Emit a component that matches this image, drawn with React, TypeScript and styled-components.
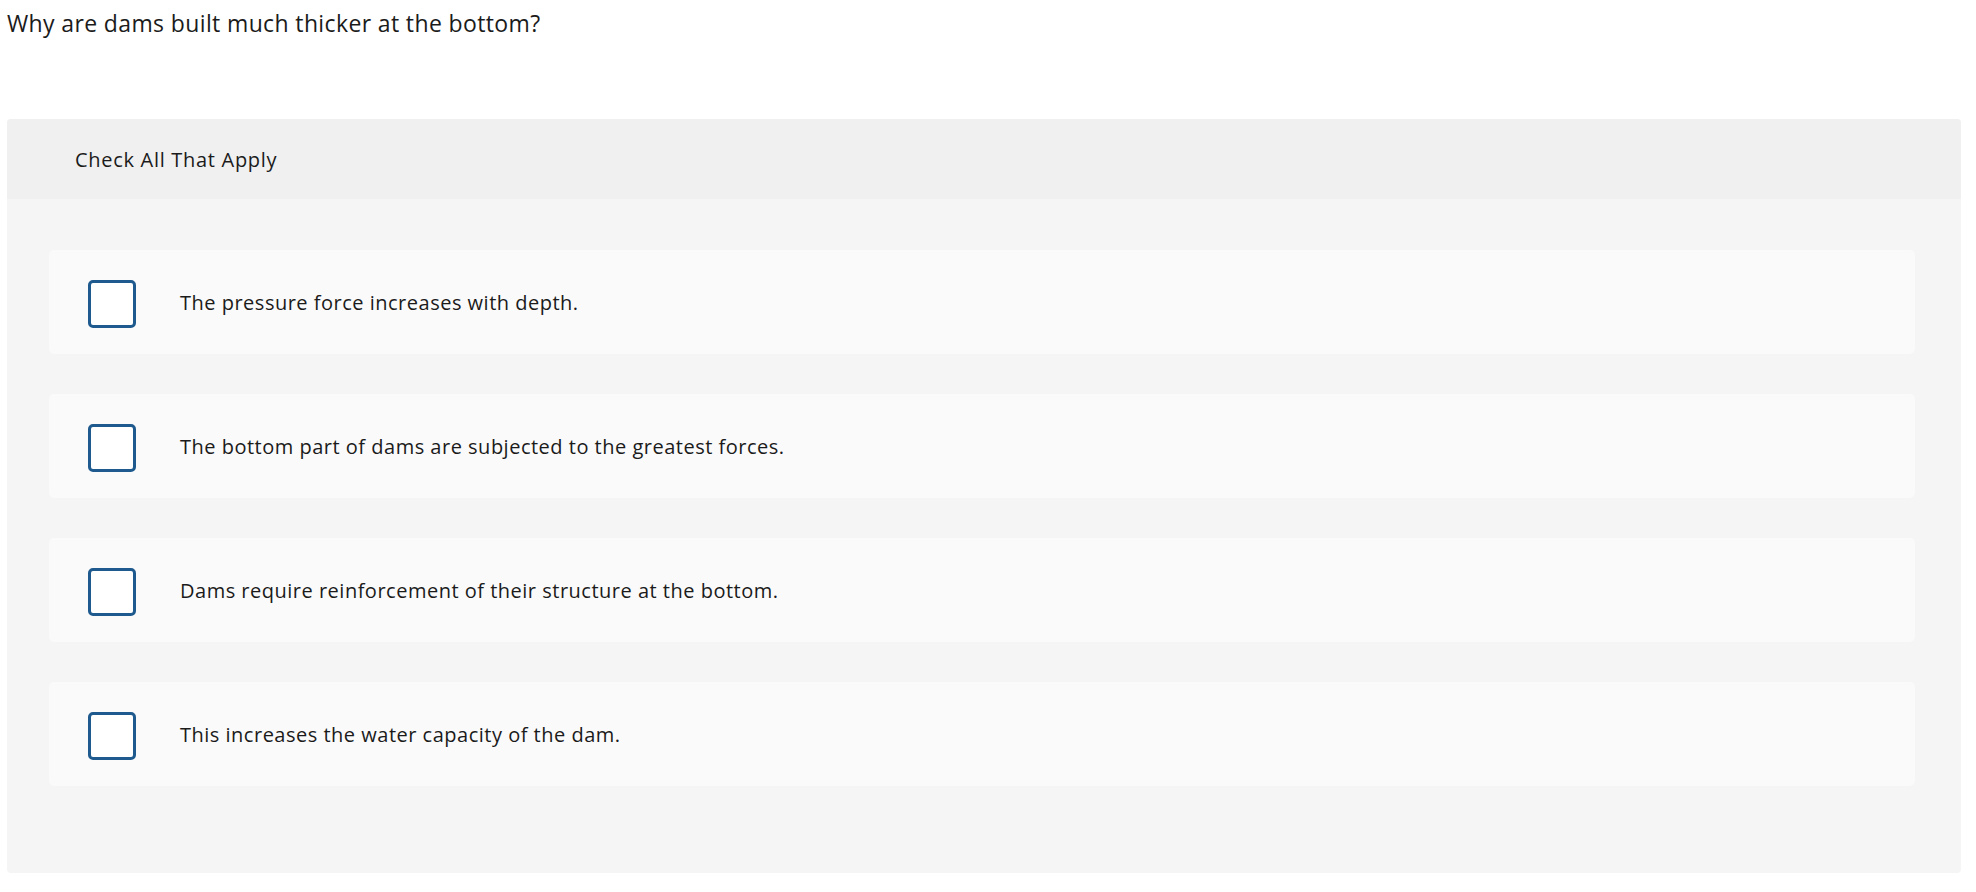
import React, { useState } from "react";
import styled, { createGlobalStyle } from "styled-components";

// global
const GlobalStyle = createGlobalStyle`
  body {
    margin: 0;
    background: #ffffff;
    font-family: "Open Sans", "Liberation Sans", Arial, sans-serif;
    color: #1b1b1b;
  }
`;

// styled components
const Page = styled.div`
  padding: 0 15px 0 7px;
`;

const Question = styled.div`
  height: 119px;
  padding-top: 6px;
  box-sizing: border-box;
  font-size: 23px;
  line-height: 34px;
  letter-spacing: 0.37px;
  color: #1b1b1b;
`;

const Panel = styled.div`
  border-radius: 4px;
  overflow: hidden;
  background-color: #f5f5f5;
`;

const Header = styled.div`
  height: 80px;
  padding-left: 68px;
  display: flex;
  align-items: center;
  background-color: #f0f0f0;
  font-size: 20px;
  letter-spacing: 0.7px;
`;

const OptionList = styled.div`
  padding: 51px 46px 87px 42px;
  display: flex;
  flex-direction: column;
  gap: 40px;
`;

const OptionRow = styled.label`
  height: 104px;
  padding: 0 0 0 39px;
  box-sizing: border-box;
  display: flex;
  align-items: center;
  gap: 44px;
  border-radius: 5px;
  background-color: #fafafa;
  cursor: pointer;
`;

const Box = styled.span<{ $checked: boolean }>`
  width: 48px;
  height: 48px;
  box-sizing: border-box;
  flex-shrink: 0;
  margin-top: 4px;
  border: 3px solid #1f5a8f;
  border-radius: 5px;
  background-color: ${(p) => (p.$checked ? "#1f5a8f" : "#ffffff")};
  display: flex;
  align-items: center;
  justify-content: center;
  color: #ffffff;
`;

const OptionText = styled.span`
  font-size: 20px;
  letter-spacing: 0.5px;
  color: #1b1b1b;
`;

// data
const options = [
  "The pressure force increases with depth.",
  "The bottom part of dams are subjected to the greatest forces.",
  "Dams require reinforcement of their structure at the bottom.",
  "This increases the water capacity of the dam.",
];

// main component
const App: React.FC = () => {
  const [checked, setChecked] = useState<boolean[]>(options.map(() => false));

  const toggle = (index: number) => {
    setChecked((prev) => prev.map((v, i) => (i === index ? !v : v)));
  };

  return (
    <>
      <GlobalStyle />
      <Page>
        <Question>Why are dams built much thicker at the bottom?</Question>
        <Panel>
          <Header>Check All That Apply</Header>
          <OptionList>
            {options.map((text, index) => (
              <OptionRow key={text} onClick={() => toggle(index)}>
                <Box $checked={checked[index]}>
                  {checked[index] && (
                    <svg width="26" height="26" viewBox="0 0 24 24" fill="none">
                      <path
                        d="M4 12.5l5 5L20 6.5"
                        stroke="currentColor"
                        strokeWidth="3"
                        strokeLinecap="round"
                        strokeLinejoin="round"
                      />
                    </svg>
                  )}
                </Box>
                <OptionText>{text}</OptionText>
              </OptionRow>
            ))}
          </OptionList>
        </Panel>
      </Page>
    </>
  );
};

export default App;
